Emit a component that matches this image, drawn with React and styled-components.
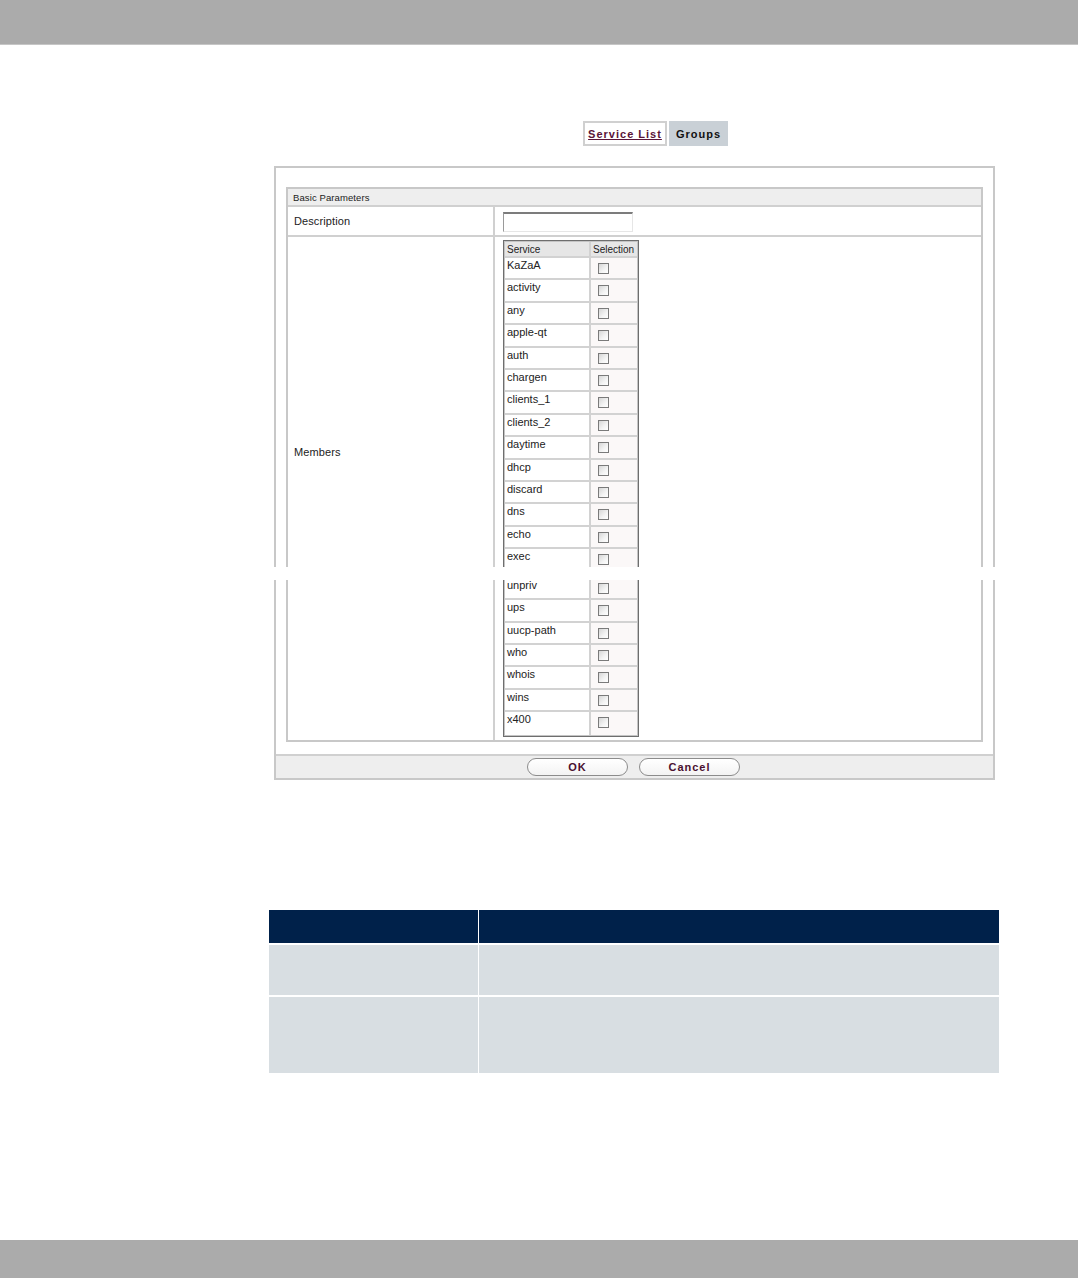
import React from "react";
import styled, { createGlobalStyle } from "styled-components";

const Global = createGlobalStyle`
  html, body { margin: 0; padding: 0; background: #fff; }
  body { font-family: "Liberation Sans", Arial, sans-serif; color: #000; }
  * { box-sizing: border-box; }
`;

const Page = styled.div`
  position: relative;
  width: 1078px;
  height: 1278px;
  display: flex;
  flex-direction: column;
  overflow: hidden;
`;

const TopBar = styled.div`
  height: 45px;
  flex: none;
  background: #ababab;
  border-bottom: 1px solid #c6c6c6;
`;

const Main = styled.div`
  flex: 1;
  display: flex;
  flex-direction: column;
`;

const TabRow = styled.div`
  display: flex;
  gap: 2px;
  padding: 76px 0 0 583px;
`;

const Tab = styled.div`
  height: 25px;
  display: flex;
  align-items: center;
  justify-content: center;
  padding: 0;
  white-space: nowrap;
  font-size: 11px;
  font-weight: bold;
  letter-spacing: 1px;
  border: 2px solid ${(p) => (p.$active ? "#c9d0d6" : "#d0d0d0")};
  background: ${(p) => (p.$active ? "#c9d0d6" : "#fff")};
  color: ${(p) => (p.$active ? "#111" : "#5a1438")};
  text-decoration: ${(p) => (p.$active ? "none" : "underline")};
  width: ${(p) => p.$w}px;
`;

const Panel = styled.div`
  margin: 20px 0 0 274px;
  width: 721px;
  border: 2px solid #c8c8c8;
  display: flex;
  flex-direction: column;
`;

const PanelBody = styled.div`
  padding: 19px 10px 12px 10px;
`;

const ParamTable = styled.div`
  border: 2px solid #c8c8c8;
  display: flex;
  flex-direction: column;
`;

const SectionHead = styled.div`
  height: 18px;
  background: #eeeeee;
  border-bottom: 2px solid #d0d0d0;
  display: flex;
  align-items: center;
  padding-left: 5px;
  font-size: 9.5px;
  letter-spacing: 0.1px;
  color: #222;
`;

const Row = styled.div`
  display: grid;
  grid-template-columns: 207px 1fr;
  border-bottom: ${(p) => (p.$last ? "none" : "2px solid #d0d0d0")};
`;

const LabelCell = styled.div`
  border-right: 2px solid #d0d0d0;
  padding: ${(p) => p.$pt || 0}px 0 0 6px;
  display: flex;
  align-items: ${(p) => (p.$pt ? "flex-start" : "center")};
  font-size: 11px;
  color: #222;
  letter-spacing: 0.1px;
`;

const ValueCell = styled.div`
  padding: ${(p) => p.$pad};
  display: flex;
  align-items: flex-start;
`;

const TextInput = styled.input`
  width: 130px;
  height: 20px;
  border-top: 2px solid #7c7c7c;
  border-left: 1px solid #9a9a9a;
  border-right: 1px solid #e6e6e6;
  border-bottom: 1px solid #e6e6e6;
  background: #fff;
  padding: 0 3px;
  font-family: "Liberation Sans", Arial, sans-serif;
  font-size: 11px;
  outline: none;
`;

const ListTable = styled.div`
  width: 136px;
  border: 1px solid #6e6e6e;
  box-shadow: inset 0 0 0 1px #c4c4c4;
  padding: 1px;
  display: flex;
  flex-direction: column;
`;

const ListRow = styled.div`
  display: grid;
  grid-template-columns: 86px 1fr;
  height: ${(p) => (p.$head ? 16 : 22.4)}px;
  border-bottom: ${(p) => (p.$end ? "none" : "2px solid #d2d2d2")};
  background: ${(p) => (p.$head ? "#e6e6e6" : "#fff")};
`;

const ListCell = styled.div`
  padding: 1px 0 0 2px;
  font-size: ${(p) => (p.$head ? 10 : 11)}px;
  color: #222;
  border-right: ${(p) => (p.$first ? "2px solid #d2d2d2" : "none")};
  background: ${(p) => (p.$sel && !p.$head ? "#fbf8f8" : "transparent")};
  display: flex;
  align-items: ${(p) => (p.$head ? "center" : "flex-start")};
  white-space: nowrap;
`;

const Check = styled.span`
  display: block;
  width: 11px;
  height: 11px;
  margin: 4px 0 0 5px;
  border: 1px solid #7a7a7a;
  background: linear-gradient(135deg, #d6d6d6 0%, #f4f4f4 60%, #fff 100%);
`;

const Gap = styled.div`
  height: 6.4px;
  border-bottom: 2px solid #d2d2d2;
`;

const Footer = styled.div`
  height: 24px;
  background: #eeeeee;
  border-top: 2px solid #d0d0d0;
  display: flex;
  justify-content: center;
  align-items: center;
  gap: 11px;
  padding-right: 2px;
`;

const Button = styled.button`
  width: 101px;
  height: 18px;
  border: 1px solid #8c8c8c;
  border-radius: 10px;
  background: linear-gradient(#ffffff, #f3f3f3);
  font-family: "Liberation Sans", Arial, sans-serif;
  font-size: 11px;
  font-weight: bold;
  letter-spacing: 1px;
  color: #4a1030;
  padding: 0;
  display: flex;
  align-items: center;
  justify-content: center;
`;

const Band = styled.div`
  position: absolute;
  left: 0;
  right: 0;
  top: 567px;
  height: 13px;
  background: #fff;
`;

const InfoTable = styled.div`
  margin: 130px 0 0 269px;
  width: 730px;
  display: flex;
  flex-direction: column;
  gap: 2px;
`;

const InfoRow = styled.div`
  display: grid;
  grid-template-columns: 209px 1fr;
  gap: 1px;
  height: ${(p) => p.$h}px;
`;

const InfoCell = styled.div`
  background: ${(p) => (p.$head ? "#00214a" : "#d8dee2")};
`;

const BottomBar = styled.div`
  height: 38px;
  flex: none;
  background: #ababab;
`;

const before = [
  "KaZaA", "activity", "any", "apple-qt", "auth", "chargen", "clients_1",
  "clients_2", "daytime", "dhcp", "discard", "dns", "echo", "exec",
];
const after = ["unpriv", "ups", "uucp-path", "who", "whois", "wins", "x400"];

function ServiceRow({ name, end }) {
  return (
    <ListRow $end={end}>
      <ListCell $first>{name}</ListCell>
      <ListCell $sel>
        <Check />
      </ListCell>
    </ListRow>
  );
}

export default function App() {
  return (
    <>
      <Global />
      <Page>
        <TopBar />
        <Main>
          <TabRow>
            <Tab $w={84}>Service List</Tab>
            <Tab $w={59} $active>Groups</Tab>
          </TabRow>
          <Panel>
            <PanelBody>
              <ParamTable>
                <SectionHead>Basic Parameters</SectionHead>
                <Row>
                  <LabelCell>Description</LabelCell>
                  <ValueCell $pad="5px 0 3px 8px">
                    <TextInput type="text" />
                  </ValueCell>
                </Row>
                <Row $last>
                  <LabelCell $pt={209}>Members</LabelCell>
                  <ValueCell $pad="3px 0 3px 8px">
                    <ListTable>
                      <ListRow $head>
                        <ListCell $head $first>Service</ListCell>
                        <ListCell $head $sel>Selection</ListCell>
                      </ListRow>
                      {before.map((n, i) => (
                        <ServiceRow key={n} name={n} end={i === before.length - 1} />
                      ))}
                      <Gap />
                      {after.map((n, i) => (
                        <ServiceRow key={n} name={n} end={i === after.length - 1} />
                      ))}
                    </ListTable>
                  </ValueCell>
                </Row>
              </ParamTable>
            </PanelBody>
            <Footer>
              <Button>OK</Button>
              <Button>Cancel</Button>
            </Footer>
          </Panel>
          <InfoTable>
            <InfoRow $h={33}>
              <InfoCell $head />
              <InfoCell $head />
            </InfoRow>
            <InfoRow $h={50}>
              <InfoCell />
              <InfoCell />
            </InfoRow>
            <InfoRow $h={76}>
              <InfoCell />
              <InfoCell />
            </InfoRow>
          </InfoTable>
        </Main>
        <BottomBar />
        <Band />
      </Page>
    </>
  );
}
